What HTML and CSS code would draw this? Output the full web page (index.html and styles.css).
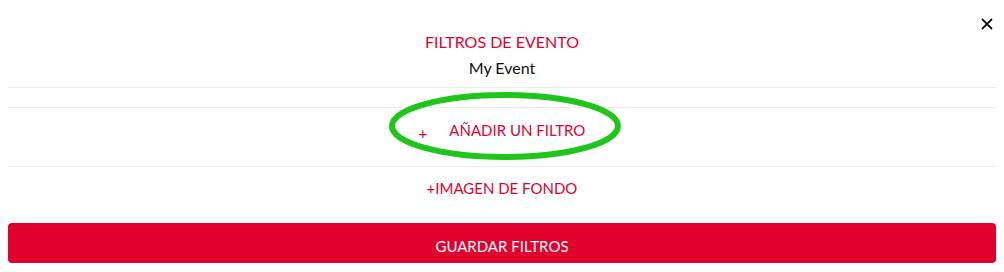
FILE: index.html
```html
<!DOCTYPE html>
<html lang="es">
  <head>
    <meta charset="UTF-8" />
    <meta name="viewport" content="width=device-width, initial-scale=1.0" />
    <title>Filtros de evento</title>
    <link rel="stylesheet" href="styles.css">
  </head>
  <body>
    <div class="modal">
      <button class="close-btn" aria-label="Cerrar">
        <svg width="14" height="14" viewBox="0 0 14 14">
          <path d="M2 2 L12 12 M12 2 L2 12" stroke="#111" stroke-width="1.8" fill="none" />
        </svg>
      </button>
      <div class="header">
        <h2 class="title">FILTROS DE EVENTO</h2>
        <div class="event-name">My Event</div>
      </div>
      <div class="filter-list"></div>
      <div class="add-filter">
        <span class="plus">+</span>AÑADIR UN FILTRO
      </div>
      <div class="background-image">+IMAGEN DE FONDO</div>
      <button class="save-btn">GUARDAR FILTROS</button>

      <svg class="highlight" width="240" height="76" viewBox="0 0 240 76">
        <ellipse cx="119" cy="37" rx="113" ry="31" fill="none" stroke="#1fc61a" stroke-width="6" />
      </svg>
    </div>
  </body>
</html>
```

FILE: styles.css
```css
body {
  margin: 0;
  font-family: Lato, "Open Sans", sans-serif;
  background-color: #fff;
}
.modal {
  position: relative;
  padding: 0 8px;
  width: 988px;
}
.close-btn {
  position: absolute;
  top: 17px;
  right: 10px;
  border: none;
  background: none;
  padding: 0;
  cursor: pointer;
}
.header {
  padding-top: 32px;
  padding-bottom: 9px;
  text-align: center;
  border-bottom: 1px solid #ececec;
}
.title {
  margin: 0;
  font-size: 16px;
  line-height: 20px;
  font-weight: normal;
  color: #e1002d;
}
.event-name {
  margin-top: 6px;
  font-size: 16px;
  line-height: 20px;
  color: #111;
}
.filter-list {
  height: 19px;
  border-bottom: 1px solid #ececec;
}
.add-filter {
  padding: 12px 0 26px;
  text-align: center;
  font-size: 15px;
  line-height: 20px;
  color: #e1002d;
  border-bottom: 1px solid #ececec;
  cursor: pointer;
}
.plus {
  display: inline-block;
  margin-right: 22px;
  position: relative;
  top: 3px;
}
.background-image {
  padding-top: 11px;
  margin-bottom: 25px;
  text-align: center;
  font-size: 15px;
  line-height: 20px;
  color: #e1002d;
  cursor: pointer;
}
.save-btn {
  display: block;
  width: 100%;
  height: 40px;
  padding: 5px 0 0;
  border: none;
  border-radius: 4px;
  background-color: #e1002d;
  color: #fff;
  font-family: Lato, "Open Sans", sans-serif;
  font-size: 15px;
  line-height: 20px;
  cursor: pointer;
}
.highlight {
  position: absolute;
  left: 386px;
  top: 89px;
  pointer-events: none;
}
```
